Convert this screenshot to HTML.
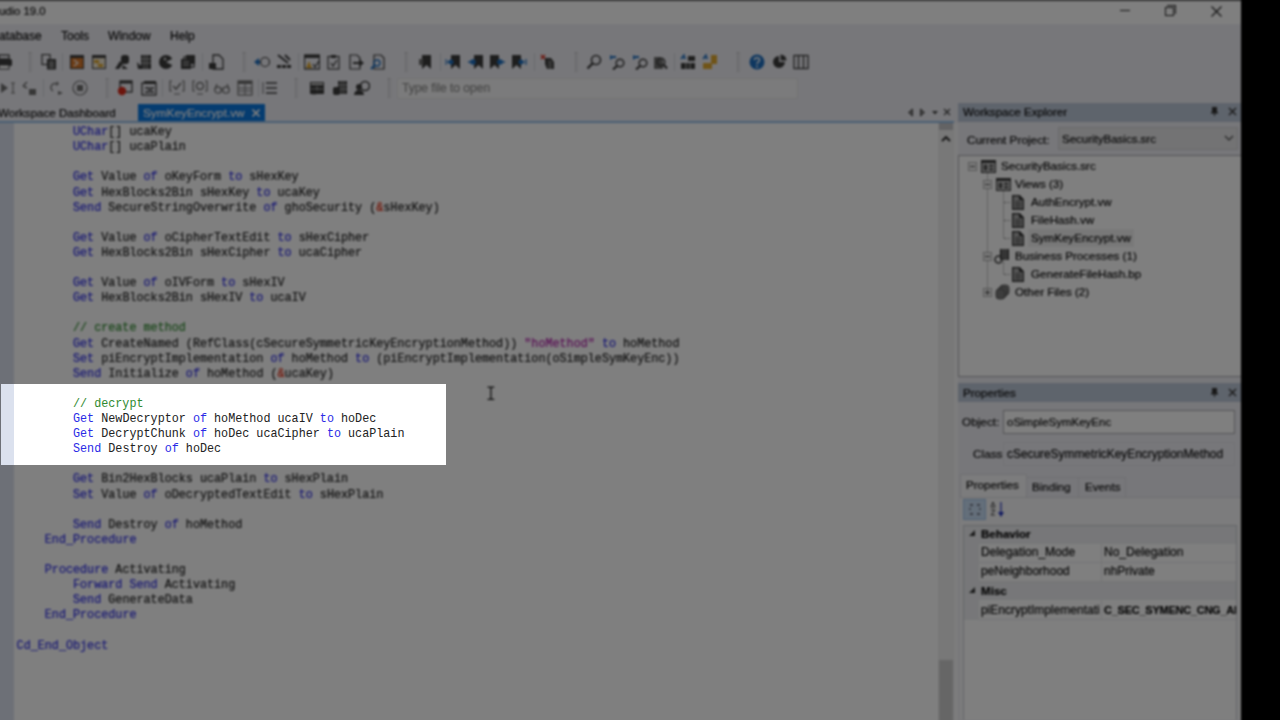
<!DOCTYPE html>
<html><head><meta charset="utf-8">
<style>
*{margin:0;padding:0;box-sizing:border-box}
html,body{width:1280px;height:720px;overflow:hidden;background:#000}
body{position:relative;font-family:"Liberation Sans",sans-serif;font-size:11.5px;color:#050505}
.a{position:absolute}
.t{position:absolute;white-space:pre;line-height:14px;-webkit-text-stroke:0.15px currentColor}
#app{position:absolute;left:0;top:0;width:1241px;height:720px}
.grip{position:absolute;width:3px;border-left:1px dotted #a9a9a9;border-right:1px dotted #c9c9c9}
.vsep{position:absolute;width:1px;background:#cfd2d8}
.ln{position:absolute;left:16.6px;height:15px;white-space:pre;font-family:"Liberation Mono",monospace;font-size:11.75px;line-height:15px;color:#222;transform:translateY(1px) scaleY(1.08);transform-origin:0 10.6px}
#blurwrap .ln{-webkit-text-stroke:0.2px currentColor}
#hl .ln{-webkit-text-stroke:0px currentColor}
.k{color:#2b2be6}.i{color:#222}.c{color:#2f8a2f}.s{color:#b01aa8}.r{color:#e02a10}
.ph{position:absolute;left:0;width:283px;height:19px;background:#bdc8d8}
.ti{position:absolute;font-size:11.6px;line-height:14px;white-space:pre;color:#000;-webkit-text-stroke:0.15px currentColor}
.dot{position:absolute;border-left:1px dotted #8a8a8a}
.doth{position:absolute;border-top:1px dotted #8a8a8a}
.pm{position:absolute;width:9px;height:9px;border:1px solid #b0b0b0;background:#f4f4f4}
.pm:after{content:"";position:absolute;left:1px;top:3px;width:5px;height:1px;background:#444}
.fi{position:absolute;width:10px;height:13px;background:#4a4a4a}
.fi:after{content:"";position:absolute;left:2px;top:4px;width:6px;height:7px;border-top:1px solid #aaa;border-bottom:1px solid #aaa}
.pr{position:absolute;left:0;width:274px;height:19px}
#ov{position:absolute;left:0;top:0;width:1280px;height:720px}
.o{position:absolute;background:rgba(0,0,0,0.5)}
</style></head><body>
<div id="blurwrap" style="position:absolute;left:0;top:0;width:1280px;height:720px;filter:blur(1px)">
<div id="app">
 <div class="a" style="left:-20px;top:-20px;width:1261px;height:760px;background:#efeff5"></div>
 <!-- title bar -->
 <div class="a" style="left:-20px;top:-20px;width:1261px;height:44px;background:#fff"></div>
 <div class="a" style="left:-20px;top:0;width:1261px;height:1px;background:#555"></div>
 <div class="a" style="left:-20px;top:-20px;width:1261px;height:20px;background:#888"></div>
 <div class="t" style="left:-1px;top:4px;font-size:11.3px">udio 19.0</div>
 <div class="a" style="left:1120px;top:10px;width:10px;height:1px;background:#222"></div>
 <div class="a" style="left:1165px;top:7px;width:9px;height:9px;border:1px solid #222"></div>
 <div class="a" style="left:1167px;top:5px;width:9px;height:9px;border-top:1px solid #222;border-right:1px solid #222"></div>
 <svg class="a" style="left:1211px;top:6px" width="11" height="11"><path d="M0.5 0.5L10.5 10.5M10.5 0.5L0.5 10.5" stroke="#222" stroke-width="1.1"/></svg>
 <!-- menu -->
 <div class="t" style="left:-1px;top:29px;font-size:12px">atabase</div>
 <div class="t" style="left:61px;top:29px;font-size:12px">Tools</div>
 <div class="t" style="left:108px;top:29px;font-size:12px">Window</div>
 <div class="t" style="left:170px;top:29px;font-size:12px">Help</div>
 <!-- toolbars -->
<svg class="a" style="left:-4px;top:54px" width="16" height="16" viewBox="0 0 16 16"><rect x="3" y="1" width="10" height="4" fill="none" stroke="#3c3c3c" stroke-width="1.3"/><rect x="0" y="5" width="16" height="7" rx="1.5" fill="#3c3c3c"/><rect x="3" y="11" width="10" height="4" fill="#fff" stroke="#3c3c3c"/></svg>
<div class="grip" style="left:29px;top:52px;height:20px"></div>
<svg class="a" style="left:41px;top:54px" width="16" height="16" viewBox="0 0 16 16"><rect x="1" y="0.5" width="8" height="10" fill="none" stroke="#3c3c3c" stroke-width="1.2"/><rect x="6" y="5" width="9" height="10.5" fill="#3c3c3c"/><path d="M8 8H13M8 10.5H13M8 13H13" stroke="#ddd"/></svg>
<div class="vsep" style="left:62px;top:53px;height:18px"></div>
<svg class="a" style="left:69px;top:54px" width="16" height="16" viewBox="0 0 16 16"><rect x="1" y="1" width="14" height="14" fill="#3c3c3c"/><rect x="2" y="4" width="12" height="10" fill="#d8782a"/><path d="M5 6L9 9L5 12" stroke="#fff" stroke-width="1.2" fill="none"/></svg>
<svg class="a" style="left:91px;top:54px" width="16" height="16" viewBox="0 0 16 16"><rect x="1" y="1" width="14" height="14" fill="#3c3c3c"/><rect x="2" y="4" width="12" height="10" fill="#f0e6d0"/><path d="M3 6H8V10H12V13H7V9H3Z" fill="#e0a830"/></svg>
<svg class="a" style="left:114px;top:54px" width="16" height="16" viewBox="0 0 16 16"><path d="M1 15L6 7L9 10L5 15Z" fill="#3c3c3c"/><rect x="7" y="1" width="8" height="9" rx="3" fill="#3c3c3c"/><path d="M9 11L14 15H8Z" fill="#3c3c3c"/></svg>
<svg class="a" style="left:136px;top:54px" width="16" height="16" viewBox="0 0 16 16"><rect x="5" y="1" width="10" height="14" fill="#3c3c3c"/><path d="M8 1V15M11 1V15M5 5H15M5 9H15" stroke="#ccc" stroke-width="0.8"/><path d="M1 8L5 12V15H2Z" fill="#3c3c3c"/></svg>
<svg class="a" style="left:158px;top:54px" width="16" height="16" viewBox="0 0 16 16"><circle cx="8" cy="8" r="7" fill="#3c3c3c"/><path d="M8 8L16 4V12Z" fill="#eef0f4"/><circle cx="7" cy="5" r="1.2" fill="#eee"/></svg>
<svg class="a" style="left:180px;top:54px" width="16" height="16" viewBox="0 0 16 16"><rect x="1" y="5" width="10" height="10" fill="#3c3c3c"/><rect x="4" y="3" width="10" height="10" fill="none" stroke="#3c3c3c" stroke-width="1.3"/><rect x="6" y="1" width="9" height="9" fill="#3c3c3c"/><path d="M3 8H9M3 11H9" stroke="#ccc"/></svg>
<div class="vsep" style="left:202px;top:53px;height:18px"></div>
<svg class="a" style="left:208px;top:54px" width="16" height="16" viewBox="0 0 16 16"><path d="M5 1H11L15 5V15H5Z" fill="none" stroke="#3c3c3c" stroke-width="1.3"/><rect x="1" y="9" width="7" height="6" fill="#3c3c3c"/></svg>
<div class="grip" style="left:243px;top:52px;height:20px"></div>
<svg class="a" style="left:254px;top:54px" width="16" height="16" viewBox="0 0 16 16"><path d="M0 8L5 4V12Z" fill="#1f6fc0"/><rect x="3" y="7" width="4" height="2" fill="#1f6fc0"/><circle cx="11" cy="8" r="4.5" fill="none" stroke="#3c3c3c" stroke-width="1.2"/></svg>
<svg class="a" style="left:276px;top:54px" width="16" height="16" viewBox="0 0 16 16"><path d="M2 1L12 9M9 1L14 6" stroke="#3c3c3c" stroke-width="2"/><rect x="1" y="11" width="4" height="3" fill="#3c3c3c"/><rect x="6" y="11" width="4" height="3" fill="#3c3c3c"/><rect x="11" y="11" width="4" height="3" fill="#3c3c3c"/></svg>
<div class="vsep" style="left:298px;top:53px;height:18px"></div>
<svg class="a" style="left:304px;top:54px" width="16" height="16" viewBox="0 0 16 16"><rect x="0.5" y="1" width="15" height="14" fill="none" stroke="#3c3c3c" stroke-width="1.3"/><rect x="0.5" y="1" width="15" height="3" fill="#3c3c3c"/><path d="M5 7L8 14H2Z" fill="#e0a830"/><path d="M9 10L11 13L15 7" stroke="#3c3c3c" stroke-width="1.3" fill="none"/></svg>
<svg class="a" style="left:326px;top:54px" width="16" height="16" viewBox="0 0 16 16"><rect x="2" y="2.5" width="11" height="12.5" fill="none" stroke="#3c3c3c" stroke-width="1.2"/><rect x="5" y="1" width="5" height="3" fill="#3c3c3c"/><path d="M5 9L7 12L11 6" stroke="#3c3c3c" stroke-width="1.3" fill="none"/></svg>
<svg class="a" style="left:348px;top:54px" width="16" height="16" viewBox="0 0 16 16"><path d="M2 1H9L12 4V15H2Z" fill="none" stroke="#3c3c3c" stroke-width="1.2"/><path d="M5 8H11V5L16 9L11 13V10H5Z" fill="#3c3c3c"/></svg>
<svg class="a" style="left:370px;top:54px" width="16" height="16" viewBox="0 0 16 16"><path d="M4 1H11L14 4V15H4Z" fill="none" stroke="#3c3c3c" stroke-width="1.2"/><circle cx="7" cy="9" r="3" fill="none" stroke="#1f6fc0" stroke-width="1.4"/><path d="M5 11L1 15" stroke="#1f6fc0" stroke-width="2"/></svg>
<div class="grip" style="left:405px;top:52px;height:20px"></div>
<svg class="a" style="left:418px;top:54px" width="16" height="16" viewBox="0 0 16 16"><path d="M4 1H13V15L8.5 11L4 15Z" fill="#3c3c3c"/><rect x="1" y="5" width="4" height="6" fill="#6e6e6e"/></svg>
<div class="vsep" style="left:440px;top:53px;height:18px"></div>
<svg class="a" style="left:445px;top:54px" width="16" height="16" viewBox="0 0 16 16"><path d="M6 1H15V15L10.5 11L6 15Z" fill="#3c3c3c"/><path d="M1 5V11" stroke="#1f6fc0"/><circle cx="6" cy="8" r="2.5" fill="#1f6fc0"/><path d="M2 8H5" stroke="#1f6fc0" stroke-width="1.5"/></svg>
<svg class="a" style="left:468px;top:54px" width="16" height="16" viewBox="0 0 16 16"><path d="M6 1H15V15L10.5 11L6 15Z" fill="#3c3c3c"/><circle cx="5" cy="8" r="2.8" fill="#1f6fc0"/><path d="M0 8H4" stroke="#1f6fc0" stroke-width="1.5"/></svg>
<svg class="a" style="left:489px;top:54px" width="16" height="16" viewBox="0 0 16 16"><path d="M1 1H10V15L5.5 11L1 15Z" fill="#3c3c3c"/><circle cx="11" cy="8" r="2.8" fill="#1f6fc0"/><path d="M12 8H16" stroke="#1f6fc0" stroke-width="1.5"/></svg>
<svg class="a" style="left:511px;top:54px" width="16" height="16" viewBox="0 0 16 16"><path d="M1 1H10V15L5.5 11L1 15Z" fill="#3c3c3c"/><circle cx="10" cy="8" r="2.5" fill="#1f6fc0"/><path d="M11 8H14M15 5V11" stroke="#1f6fc0" stroke-width="1.2"/></svg>
<div class="vsep" style="left:534px;top:53px;height:18px"></div>
<svg class="a" style="left:540px;top:54px" width="16" height="16" viewBox="0 0 16 16"><path d="M1 1L5 5M5 1L1 5" stroke="#d82a1a" stroke-width="1.5"/><path d="M5 4H11L14 8V15H7L5 10Z" fill="#3c3c3c"/><path d="M9 6V15M11 7V15" stroke="#999"/></svg>
<div class="grip" style="left:575px;top:52px;height:20px"></div>
<svg class="a" style="left:586px;top:54px" width="16" height="16" viewBox="0 0 16 16"><circle cx="10" cy="6" r="4.5" fill="none" stroke="#3c3c3c" stroke-width="1.6"/><path d="M7 9L1.5 14.5" stroke="#3c3c3c" stroke-width="2.4"/></svg>
<svg class="a" style="left:609px;top:54px" width="16" height="16" viewBox="0 0 16 16"><path d="M1 1L5 3L1 6Z" fill="#1f6fc0"/><rect x="4" y="2" width="3" height="2" fill="#1f6fc0"/><circle cx="11" cy="9" r="3.8" fill="none" stroke="#3c3c3c" stroke-width="1.5"/><path d="M8.5 11.5L4 15.5" stroke="#3c3c3c" stroke-width="2.2"/></svg>
<svg class="a" style="left:632px;top:54px" width="16" height="16" viewBox="0 0 16 16"><path d="M1 1L5 3L1 6Z" fill="#1f6fc0"/><rect x="4" y="2" width="3" height="2" fill="#1f6fc0"/><circle cx="11" cy="9" r="3.8" fill="none" stroke="#3c3c3c" stroke-width="1.5"/><path d="M8.5 11.5L4 15.5" stroke="#3c3c3c" stroke-width="2.2"/></svg>
<svg class="a" style="left:652px;top:54px" width="16" height="16" viewBox="0 0 16 16"><path d="M2 3H8L11 6V15H2Z" fill="#6e6e6e"/><circle cx="9" cy="8" r="3.8" fill="none" stroke="#3c3c3c" stroke-width="1.5"/><path d="M11.5 10.5L15 14.5" stroke="#3c3c3c" stroke-width="2.2"/></svg>
<div class="vsep" style="left:674px;top:53px;height:18px"></div>
<svg class="a" style="left:680px;top:54px" width="16" height="16" viewBox="0 0 16 16"><path d="M1 5L4 1V4H6" stroke="#1f6fc0" stroke-width="1.5" fill="none"/><rect x="8" y="2" width="7" height="5" fill="#3c3c3c"/><rect x="1" y="9" width="14" height="6" fill="#3c3c3c"/><path d="M6 9V15M10 9V15" stroke="#bbb"/></svg>
<svg class="a" style="left:702px;top:54px" width="16" height="16" viewBox="0 0 16 16"><path d="M1 5L4 1V4H6" stroke="#1f6fc0" stroke-width="1.5" fill="none"/><rect x="9" y="1" width="6" height="6" fill="#e0a830"/><rect x="1" y="9" width="9" height="6" fill="#e0a830"/><rect x="9" y="6" width="6" height="4" fill="#e0a830"/></svg>
<div class="grip" style="left:737px;top:52px;height:20px"></div>
<svg class="a" style="left:749px;top:54px" width="16" height="16" viewBox="0 0 16 16"><circle cx="8" cy="8" r="7.5" fill="#1f6fc0"/><path d="M5.5 6C5.5 3 10.5 3 10.5 6C10.5 8 8 8 8 10" stroke="#fff" stroke-width="1.6" fill="none"/><circle cx="8" cy="12.5" r="1" fill="#fff"/></svg>
<svg class="a" style="left:771px;top:54px" width="16" height="16" viewBox="0 0 16 16"><path d="M8 2A6 6 0 1 0 14 8H8Z" fill="#3c3c3c"/><path d="M9.5 0.5V6.5H15.5A6 6 0 0 0 9.5 0.5Z" fill="#3c3c3c"/></svg>
<svg class="a" style="left:793px;top:54px" width="16" height="16" viewBox="0 0 16 16"><rect x="1" y="1.5" width="14" height="13" fill="none" stroke="#3c3c3c" stroke-width="1.3"/><path d="M5.5 2V14M10.5 2V14" stroke="#3c3c3c" stroke-width="1.3"/></svg>
<svg class="a" style="left:0px;top:80px" width="16" height="16" viewBox="0 0 16 16"><path d="M1 3L8 8L1 13Z" fill="#6e6e6e"/><path d="M11 3H15M13 3V13M11 13H15" stroke="#6e6e6e" stroke-width="1.1"/></svg>
<svg class="a" style="left:21px;top:80px" width="16" height="16" viewBox="0 0 16 16"><path d="M2 6L6 2M2 6L6 8" stroke="#6e6e6e" stroke-width="1.5"/><rect x="8" y="9" width="7" height="6" fill="#6e6e6e"/></svg>
<div class="vsep" style="left:43px;top:79px;height:18px"></div>
<svg class="a" style="left:48px;top:80px" width="16" height="16" viewBox="0 0 16 16"><path d="M9 4A4 4 0 1 0 5 11" stroke="#6e6e6e" stroke-width="1.4" fill="none"/><path d="M9 1L11 4L8 6Z" fill="#6e6e6e"/><path d="M10 11L15 13L10 15Z" fill="#6e6e6e"/></svg>
<svg class="a" style="left:72px;top:80px" width="16" height="16" viewBox="0 0 16 16"><circle cx="8" cy="8" r="7" fill="none" stroke="#6e6e6e" stroke-width="1.2"/><rect x="5" y="5" width="6" height="6" fill="#6e6e6e"/></svg>
<div class="grip" style="left:106px;top:78px;height:20px"></div>
<svg class="a" style="left:117px;top:80px" width="16" height="16" viewBox="0 0 16 16"><rect x="3" y="1" width="12" height="11" fill="none" stroke="#3c3c3c" stroke-width="1.3"/><rect x="3" y="1" width="12" height="2.5" fill="#3c3c3c"/><circle cx="5" cy="11" r="4.2" fill="#d82a1a"/></svg>
<svg class="a" style="left:141px;top:80px" width="16" height="16" viewBox="0 0 16 16"><rect x="1" y="3" width="14" height="12" fill="none" stroke="#3c3c3c" stroke-width="1.3"/><rect x="3" y="1" width="12" height="3" fill="#3c3c3c"/><path d="M4 8H8V12H4M13 8H10V12H13" stroke="#3c3c3c" stroke-width="1.3" fill="none"/></svg>
<div class="vsep" style="left:162px;top:79px;height:18px"></div>
<svg class="a" style="left:169px;top:80px" width="16" height="16" viewBox="0 0 16 16"><path d="M3 1H1V11H3M13 1H15V11H13" stroke="#6e6e6e" stroke-width="1.2" fill="none"/><path d="M4 6L7 9L12 3" stroke="#6e6e6e" stroke-width="1.6" fill="none"/><path d="M5 14H11" stroke="#6e6e6e"/></svg>
<svg class="a" style="left:192px;top:80px" width="16" height="16" viewBox="0 0 16 16"><path d="M3 1H1V11H3M13 1H15V11H13" stroke="#6e6e6e" stroke-width="1.2" fill="none"/><circle cx="8" cy="6" r="3.5" fill="none" stroke="#6e6e6e" stroke-width="1.5"/><path d="M5 14H11" stroke="#6e6e6e"/></svg>
<svg class="a" style="left:214px;top:80px" width="16" height="16" viewBox="0 0 16 16"><circle cx="4" cy="10" r="3.2" fill="none" stroke="#6e6e6e" stroke-width="1.3"/><circle cx="12" cy="10" r="3.2" fill="none" stroke="#6e6e6e" stroke-width="1.3"/><path d="M7 9H9M1 9L3 4M15 9L13 4" stroke="#6e6e6e" stroke-width="1.2"/></svg>
<svg class="a" style="left:237px;top:80px" width="16" height="16" viewBox="0 0 16 16"><rect x="1" y="1" width="14" height="14" fill="none" stroke="#6e6e6e" stroke-width="1.2"/><rect x="1" y="1" width="14" height="3" fill="#6e6e6e"/><path d="M1 8H15M1 11H15M8 4V15" stroke="#6e6e6e"/></svg>
<div class="vsep" style="left:258px;top:79px;height:18px"></div>
<svg class="a" style="left:262px;top:80px" width="16" height="16" viewBox="0 0 16 16"><path d="M4 3H15M4 8H15M4 13H15" stroke="#3c3c3c" stroke-width="1.6"/><path d="M1 2V14" stroke="#6e6e6e"/></svg>
<div class="grip" style="left:295px;top:78px;height:20px"></div>
<svg class="a" style="left:309px;top:80px" width="16" height="16" viewBox="0 0 16 16"><rect x="1" y="2" width="14" height="12" fill="#3c3c3c"/><rect x="2" y="3" width="12" height="2" fill="#ccc"/><path d="M8 6V13M2 9H14" stroke="#aaa"/><ellipse cx="5" cy="12" rx="4" ry="2.5" fill="#3c3c3c"/></svg>
<svg class="a" style="left:332px;top:80px" width="16" height="16" viewBox="0 0 16 16"><rect x="6" y="1" width="9" height="13" fill="#3c3c3c"/><path d="M9 1V14M12 1V14M6 5H15M6 9H15" stroke="#aaa"/><rect x="1" y="7" width="7" height="8" rx="2" fill="#3c3c3c"/></svg>
<svg class="a" style="left:354px;top:80px" width="16" height="16" viewBox="0 0 16 16"><circle cx="11" cy="6" r="4.5" fill="none" stroke="#3c3c3c" stroke-width="1.6"/><circle cx="5" cy="7" r="3" fill="#3c3c3c"/><path d="M0 15A5 5 0 0 1 10 15Z" fill="#3c3c3c"/></svg>
<div class="grip" style="left:388px;top:78px;height:20px"></div>
 <div class="a" style="left:397px;top:78px;width:401px;height:21px;background:#f7f7f8;border:1px solid #e4e4e6"></div>
 <div class="t" style="left:402px;top:81px;font-size:12px;color:#8c8c8c">Type file to open</div>
 <!-- tabs -->
 <div class="t" style="left:-2px;top:106px;font-size:11.6px">Workspace Dashboard</div>
 <div class="a" style="left:138px;top:104px;width:127px;height:18px;background:#0a78e0"></div>
 <div class="t" style="left:143px;top:106px;font-size:11.8px;color:#fff">SymKeyEncrypt.vw</div>
 <svg class="a" style="left:252px;top:109px" width="8" height="8"><path d="M0.5 0.5L7.5 7.5M7.5 0.5L0.5 7.5" stroke="#fff" stroke-width="1.6"/></svg>
 <svg class="a" style="left:906px;top:108px" width="48" height="10"><path d="M6.5 1L2.5 4.5L6.5 8Z" fill="#888" stroke="#444" stroke-width="1"/><path d="M14.5 1L18.5 4.5L14.5 8Z" fill="#888" stroke="#444" stroke-width="1"/><path d="M26 3H32L29 6.5Z" fill="#444"/><path d="M38 1L44 7M44 1L38 7" stroke="#444" stroke-width="1.2"/></svg>
 <div class="a" style="left:-20px;top:121px;width:974px;height:2px;background:#92bde6"></div>
 <!-- editor -->
 <div class="a" style="left:0;top:123px;width:938px;height:617px;background:#fff">
  <div class="a" style="left:-20px;top:0;width:34px;height:617px;background:#dbe1ee"></div>
  <div class="a" style="left:0;top:1.2px;width:938px;height:596px">
<div class="ln" style="top:0.00px">        <span class="k">UChar</span><span class="i">[] ucaKey</span></div>
<div class="ln" style="top:15.10px">        <span class="k">UChar</span><span class="i">[] ucaPlain</span></div>
<div class="ln" style="top:45.30px">        <span class="k">Get</span><span class="i"> Value </span><span class="k">of</span><span class="i"> oKeyForm </span><span class="k">to</span><span class="i"> sHexKey</span></div>
<div class="ln" style="top:60.40px">        <span class="k">Get</span><span class="i"> HexBlocks2Bin sHexKey </span><span class="k">to</span><span class="i"> ucaKey</span></div>
<div class="ln" style="top:75.50px">        <span class="k">Send</span><span class="i"> SecureStringOverwrite </span><span class="k">of</span><span class="i"> ghoSecurity (</span><span class="r">&amp;</span><span class="i">sHexKey)</span></div>
<div class="ln" style="top:105.70px">        <span class="k">Get</span><span class="i"> Value </span><span class="k">of</span><span class="i"> oCipherTextEdit </span><span class="k">to</span><span class="i"> sHexCipher</span></div>
<div class="ln" style="top:120.80px">        <span class="k">Get</span><span class="i"> HexBlocks2Bin sHexCipher </span><span class="k">to</span><span class="i"> ucaCipher</span></div>
<div class="ln" style="top:151.00px">        <span class="k">Get</span><span class="i"> Value </span><span class="k">of</span><span class="i"> oIVForm </span><span class="k">to</span><span class="i"> sHexIV</span></div>
<div class="ln" style="top:166.10px">        <span class="k">Get</span><span class="i"> HexBlocks2Bin sHexIV </span><span class="k">to</span><span class="i"> ucaIV</span></div>
<div class="ln" style="top:196.30px">        <span class="c">// create method</span></div>
<div class="ln" style="top:211.40px">        <span class="k">Get</span><span class="i"> CreateNamed (RefClass(cSecureSymmetricKeyEncryptionMethod)) </span><span class="s">&quot;hoMethod&quot;</span><span class="i"> </span><span class="k">to</span><span class="i"> hoMethod</span></div>
<div class="ln" style="top:226.50px">        <span class="k">Set</span><span class="i"> piEncryptImplementation </span><span class="k">of</span><span class="i"> hoMethod </span><span class="k">to</span><span class="i"> (piEncryptImplementation(oSimpleSymKeyEnc))</span></div>
<div class="ln" style="top:241.60px">        <span class="k">Send</span><span class="i"> Initialize </span><span class="k">of</span><span class="i"> hoMethod (</span><span class="r">&amp;</span><span class="i">ucaKey)</span></div>
<div class="ln" style="top:271.80px">        <span class="c">// decrypt</span></div>
<div class="ln" style="top:286.90px">        <span class="k">Get</span><span class="i"> NewDecryptor </span><span class="k">of</span><span class="i"> hoMethod ucaIV </span><span class="k">to</span><span class="i"> hoDec</span></div>
<div class="ln" style="top:302.00px">        <span class="k">Get</span><span class="i"> DecryptChunk </span><span class="k">of</span><span class="i"> hoDec ucaCipher </span><span class="k">to</span><span class="i"> ucaPlain</span></div>
<div class="ln" style="top:317.10px">        <span class="k">Send</span><span class="i"> Destroy </span><span class="k">of</span><span class="i"> hoDec</span></div>
<div class="ln" style="top:347.30px">        <span class="k">Get</span><span class="i"> Bin2HexBlocks ucaPlain </span><span class="k">to</span><span class="i"> sHexPlain</span></div>
<div class="ln" style="top:362.40px">        <span class="k">Set</span><span class="i"> Value </span><span class="k">of</span><span class="i"> oDecryptedTextEdit </span><span class="k">to</span><span class="i"> sHexPlain</span></div>
<div class="ln" style="top:392.60px">        <span class="k">Send</span><span class="i"> Destroy </span><span class="k">of</span><span class="i"> hoMethod</span></div>
<div class="ln" style="top:407.70px">    <span class="k">End_Procedure</span></div>
<div class="ln" style="top:437.90px">    <span class="k">Procedure</span><span class="i"> Activating</span></div>
<div class="ln" style="top:453.00px">        <span class="k">Forward Send</span><span class="i"> Activating</span></div>
<div class="ln" style="top:468.10px">        <span class="k">Send</span><span class="i"> GenerateData</span></div>
<div class="ln" style="top:483.20px">    <span class="k">End_Procedure</span></div>
<div class="ln" style="top:513.40px"><span class="k">Cd_End_Object</span></div>
  </div>
 </div>
 <svg class="a" style="left:487px;top:386px" width="8" height="15"><path d="M0.5 1.2H3.2L3.9 2.2L4.6 1.2H7.3M3.9 2V12.5M0.5 13.3H3.2L3.9 12.3L4.6 13.3H7.3" stroke="#1a1a1a" stroke-width="1.3" fill="none"/></svg>
 <!-- vscroll -->
 <div class="a" style="left:938px;top:123px;width:16px;height:617px;background:#f0f0f0"></div>
 <div class="a" style="left:954px;top:123px;width:4px;height:617px;background:#f9f9fa"></div>
 <div class="a" style="left:939px;top:123px;width:14px;height:7px;background:#c6c6c9"></div>
 <svg class="a" style="left:941px;top:135px" width="10" height="7"><path d="M1 6L5 2L9 6" stroke="#1e1e1e" stroke-width="1.8" fill="none"/></svg>
 <div class="a" style="left:939px;top:660px;width:14px;height:70px;background:#cdcdcd"></div>
 <!-- workspace explorer -->
 <div class="ph" style="left:958px;top:103px;height:18.5px"></div>
 <div class="t" style="left:963px;top:105px;font-size:11.6px">Workspace Explorer</div>
 <svg class="a" style="left:1210px;top:107px" width="28" height="10"><rect x="2" y="0" width="5" height="6" fill="#333"/><rect x="1" y="5" width="7" height="1.5" fill="#333"/><rect x="4" y="6" width="1" height="3" fill="#333"/><path d="M19 1L26 8M26 1L19 8" stroke="#333" stroke-width="1.4"/></svg>
 <div class="t" style="left:967px;top:133px;font-size:11.8px">Current Project:</div>
 <div class="a" style="left:1058px;top:127px;width:180px;height:23px;background:#e6e6e8;border:1px solid #d2d2d5"></div>
 <div class="t" style="left:1062px;top:132px;font-size:11.5px">SecurityBasics.src</div>
 <svg class="a" style="left:1224px;top:135px" width="10" height="7"><path d="M1 1L5 5L9 1" stroke="#444" stroke-width="1.1" fill="none"/></svg>
 <div class="a" style="left:958px;top:155px;width:283px;height:222px;background:#fff;border:1px solid #a9a9ad;border-right:none"></div>
<div class="a" style="left:1028px;top:229px;width:106px;height:18px;background:#f1f1f1"></div>
<div class="dot" style="left:972px;top:171px;height:0px"></div>
<div class="dot" style="left:987px;top:172px;height:120px"></div>
<div class="dot" style="left:1003px;top:190px;height:48px"></div>
<div class="dot" style="left:1003px;top:262px;height:12px"></div>
<div class="doth" style="left:1004px;top:202px;width:6px"></div>
<div class="doth" style="left:1004px;top:220px;width:6px"></div>
<div class="doth" style="left:1004px;top:238px;width:6px"></div>
<div class="doth" style="left:1004px;top:274px;width:6px"></div>
<div class="pm" style="left:968px;top:162px"></div>
<svg class="a" style="left:981px;top:159px" width="15" height="14"><rect x="0.6" y="1.6" width="13.8" height="11.8" fill="#ddd" stroke="#3a3a3a" stroke-width="1.2"/><rect x="0.5" y="1" width="14" height="3" fill="#3a3a3a"/><rect x="2.5" y="5.5" width="4" height="6" fill="#555"/><rect x="8" y="5.5" width="4.5" height="2.5" fill="#555"/><rect x="8" y="9" width="4.5" height="2.5" fill="#555"/></svg>
<div class="ti" style="left:1001px;top:159px">SecurityBasics.src</div>
<div class="pm" style="left:983px;top:180px"></div>
<svg class="a" style="left:996px;top:177px" width="15" height="14"><rect x="0.6" y="1.6" width="13.8" height="11.8" fill="#ddd" stroke="#3a3a3a" stroke-width="1.2"/><rect x="0.5" y="1" width="14" height="3" fill="#3a3a3a"/><rect x="2.5" y="5.5" width="4" height="6" fill="#555"/><rect x="8" y="5.5" width="4.5" height="2.5" fill="#555"/><rect x="8" y="9" width="4.5" height="2.5" fill="#555"/></svg>
<div class="ti" style="left:1015px;top:177px">Views (3)</div>
<svg class="a" style="left:1012px;top:195px" width="12" height="15"><path d="M0.7 0.7H7.5L11.3 4.5V14.3H0.7Z" fill="#a8a8a8" stroke="#2a2a2a" stroke-width="1.3"/><path d="M7.5 0.7V4.5H11.3" fill="#333" stroke="#2a2a2a"/><path d="M3 7H9M3 9.5H9M3 12H9" stroke="#3a3a3a" stroke-width="1.1"/></svg>
<div class="ti" style="left:1031px;top:195px">AuthEncrypt.vw</div>
<svg class="a" style="left:1012px;top:213px" width="12" height="15"><path d="M0.7 0.7H7.5L11.3 4.5V14.3H0.7Z" fill="#a8a8a8" stroke="#2a2a2a" stroke-width="1.3"/><path d="M7.5 0.7V4.5H11.3" fill="#333" stroke="#2a2a2a"/><path d="M3 7H9M3 9.5H9M3 12H9" stroke="#3a3a3a" stroke-width="1.1"/></svg>
<div class="ti" style="left:1031px;top:213px">FileHash.vw</div>
<svg class="a" style="left:1012px;top:231px" width="12" height="15"><path d="M0.7 0.7H7.5L11.3 4.5V14.3H0.7Z" fill="#a8a8a8" stroke="#2a2a2a" stroke-width="1.3"/><path d="M7.5 0.7V4.5H11.3" fill="#333" stroke="#2a2a2a"/><path d="M3 7H9M3 9.5H9M3 12H9" stroke="#3a3a3a" stroke-width="1.1"/></svg>
<div class="ti" style="left:1031px;top:231px">SymKeyEncrypt.vw</div>
<div class="pm" style="left:983px;top:252px"></div>
<svg class="a" style="left:994px;top:248px" width="16" height="16"><rect x="6" y="1" width="9" height="11" fill="#3a3a3a"/><path d="M9 1V12M12 1V12" stroke="#ccc"/><circle cx="4.5" cy="11.5" r="3.5" fill="none" stroke="#3a3a3a" stroke-width="1.6"/></svg>
<div class="ti" style="left:1015px;top:249px">Business Processes (1)</div>
<svg class="a" style="left:1012px;top:267px" width="12" height="15"><path d="M0.7 0.7H7.5L11.3 4.5V14.3H0.7Z" fill="#a8a8a8" stroke="#2a2a2a" stroke-width="1.3"/><path d="M7.5 0.7V4.5H11.3" fill="#333" stroke="#2a2a2a"/><path d="M3 7H9M3 9.5H9M3 12H9" stroke="#3a3a3a" stroke-width="1.1"/></svg>
<div class="ti" style="left:1031px;top:267px">GenerateFileHash.bp</div>
<div class="pm" style="left:983px;top:288px"></div>
<div class="a" style="left:987px;top:290px;width:1px;height:5px;background:#444"></div>
<svg class="a" style="left:995px;top:284px" width="15" height="16"><rect x="5" y="1" width="9" height="10" rx="3" fill="#8a8a8a" stroke="#444" stroke-width="0.8"/><rect x="3" y="3" width="9" height="10" rx="3" fill="#8a8a8a" stroke="#444" stroke-width="0.8"/><rect x="1" y="5" width="9" height="10" rx="3" fill="#7a7a7a" stroke="#444" stroke-width="0.8"/></svg>
<div class="ti" style="left:1015px;top:285px">Other Files (2)</div>
 <!-- properties -->
 <div class="ph" style="left:958px;top:383px"></div>
 <div class="t" style="left:963px;top:386px;font-size:11.6px">Properties</div>
 <svg class="a" style="left:1210px;top:388px" width="28" height="10"><rect x="2" y="0" width="5" height="6" fill="#333"/><rect x="1" y="5" width="7" height="1.5" fill="#333"/><rect x="4" y="6" width="1" height="3" fill="#333"/><path d="M19 1L26 8M26 1L19 8" stroke="#333" stroke-width="1.4"/></svg>
 <div class="t" style="left:962px;top:415px;font-size:11.8px">Object:</div>
 <div class="a" style="left:1003px;top:410px;width:232px;height:24px;background:#fff;border:1px solid #a9a9ad"></div>
 <div class="t" style="left:1007px;top:415px;font-size:11.5px">oSimpleSymKeyEnc</div>
 <div class="t" style="left:973px;top:447px;font-size:11.8px">Class</div>
 <div class="a" style="left:1003px;top:442px;width:232px;height:24px;background:transparent;border:1px solid #e4e4e8"></div>
 <div class="t" style="left:1007px;top:447px;font-size:11.9px">cSecureSymmetricKeyEncryptionMethod</div>
 <!-- prop tabs -->
 <div class="a" style="left:960px;top:474px;width:67px;height:23px;background:#f9f9fa;border:1px solid #dcdde2;border-bottom:none"></div>
 <div class="a" style="left:1027px;top:477px;width:52px;height:20px;border:1px solid #dcdde2;border-bottom:none;border-left:none"></div>
 <div class="a" style="left:1079px;top:477px;width:47px;height:20px;border:1px solid #dcdde2;border-bottom:none;border-left:none"></div>
 <div class="t" style="left:966px;top:478px;font-size:11.6px">Properties</div>
 <div class="t" style="left:1032px;top:480px;font-size:11.6px">Binding</div>
 <div class="t" style="left:1085px;top:480px;font-size:11.6px">Events</div>
 <div class="a" style="left:960px;top:497px;width:281px;height:223px;background:#f9f9fa;border-top:1px solid #dcdde2"></div>
 <div class="a" style="left:963px;top:499px;width:23px;height:21px;background:#c9def5;border:1px solid #9fc3ea"></div>
 <svg class="a" style="left:967px;top:502px" width="16" height="16"><path d="M3 3H6M10 3H13M3 12H6M10 12H13M3 6V8M13 6V8" stroke="#556" stroke-width="1.3"/></svg>
 <svg class="a" style="left:990px;top:501px" width="16" height="18"><path d="M3 1L1 6H5Z" fill="none" stroke="#444"/><path d="M1 9H5L1 14H5" stroke="#444" fill="none"/><path d="M11 1V14" stroke="#2030c0" stroke-width="1.2"/><path d="M8 11L11 16L14 11Z" fill="#2030c0"/></svg>
 <!-- grid -->
 <div class="a" style="left:963px;top:525px;width:274px;height:195px;background:#fff;border:1px solid #c8cad0;border-bottom:none"></div>
 <div class="a" style="left:964px;top:526px;width:15px;height:94px;background:#eeeff2"></div>
 <div class="a" style="left:964px;top:526px;width:272px;height:18px;background:#eeeff2"></div>
 <div class="a" style="left:964px;top:582px;width:272px;height:18px;background:#eeeff2"></div>
 <div class="a" style="left:979px;top:562px;width:257px;height:1px;background:#e8e8ea"></div>
 <div class="a" style="left:979px;top:581px;width:257px;height:1px;background:#e8e8ea"></div>
 <div class="a" style="left:979px;top:619px;width:257px;height:1px;background:#e8e8ea"></div>
 <div class="a" style="left:1101px;top:544px;width:1px;height:38px;background:#e8e8ea"></div>
 <div class="a" style="left:1101px;top:600px;width:1px;height:20px;background:#e8e8ea"></div>
 <svg class="a" style="left:968px;top:529px" width="8" height="8"><path d="M7 1V7H1Z" fill="#333"/></svg>
 <svg class="a" style="left:968px;top:586px" width="8" height="8"><path d="M7 1V7H1Z" fill="#333"/></svg>
 <div class="t" style="left:981px;top:527px;font-size:11.6px;font-weight:bold">Behavior</div>
 <div class="t" style="left:981px;top:545px;font-size:12px">Delegation_Mode</div>
 <div class="t" style="left:1104px;top:545px;font-size:12px">No_Delegation</div>
 <div class="t" style="left:981px;top:564px;font-size:12px">peNeighborhood</div>
 <div class="t" style="left:1104px;top:564px;font-size:12px">nhPrivate</div>
 <div class="t" style="left:981px;top:584px;font-size:11.6px;font-weight:bold">Misc</div>
 <div class="a" style="left:979px;top:601px;width:121px;height:18px;overflow:hidden"><div class="t" style="left:2px;top:2px;font-size:12px">piEncryptImplementation</div></div>
 <div class="a" style="left:1102px;top:601px;width:134px;height:18px;overflow:hidden"><div class="t" style="left:2px;top:2px;font-size:11px;font-weight:bold;letter-spacing:-0.25px">C_SEC_SYMENC_CNG_AES</div></div>
</div>
</div>
<div id="ov">
 <div class="o" style="left:0;top:0;width:1280px;height:720px"></div>
</div>
<!-- sharp highlight -->
<div id="hl" class="a" style="left:1px;top:384px;width:445px;height:81px;overflow:hidden;background:#fff">
 <div class="a" style="left:-1px;top:-261px;width:938px;height:597px">
  <div class="a" style="left:0;top:0;width:14px;height:597px;background:#dbe1ee"></div>
  <div class="a" style="left:0;top:1.2px;width:938px;height:596px">
<div class="ln" style="top:0.00px">        <span class="k">UChar</span><span class="i">[] ucaKey</span></div>
<div class="ln" style="top:15.10px">        <span class="k">UChar</span><span class="i">[] ucaPlain</span></div>
<div class="ln" style="top:45.30px">        <span class="k">Get</span><span class="i"> Value </span><span class="k">of</span><span class="i"> oKeyForm </span><span class="k">to</span><span class="i"> sHexKey</span></div>
<div class="ln" style="top:60.40px">        <span class="k">Get</span><span class="i"> HexBlocks2Bin sHexKey </span><span class="k">to</span><span class="i"> ucaKey</span></div>
<div class="ln" style="top:75.50px">        <span class="k">Send</span><span class="i"> SecureStringOverwrite </span><span class="k">of</span><span class="i"> ghoSecurity (</span><span class="r">&amp;</span><span class="i">sHexKey)</span></div>
<div class="ln" style="top:105.70px">        <span class="k">Get</span><span class="i"> Value </span><span class="k">of</span><span class="i"> oCipherTextEdit </span><span class="k">to</span><span class="i"> sHexCipher</span></div>
<div class="ln" style="top:120.80px">        <span class="k">Get</span><span class="i"> HexBlocks2Bin sHexCipher </span><span class="k">to</span><span class="i"> ucaCipher</span></div>
<div class="ln" style="top:151.00px">        <span class="k">Get</span><span class="i"> Value </span><span class="k">of</span><span class="i"> oIVForm </span><span class="k">to</span><span class="i"> sHexIV</span></div>
<div class="ln" style="top:166.10px">        <span class="k">Get</span><span class="i"> HexBlocks2Bin sHexIV </span><span class="k">to</span><span class="i"> ucaIV</span></div>
<div class="ln" style="top:196.30px">        <span class="c">// create method</span></div>
<div class="ln" style="top:211.40px">        <span class="k">Get</span><span class="i"> CreateNamed (RefClass(cSecureSymmetricKeyEncryptionMethod)) </span><span class="s">&quot;hoMethod&quot;</span><span class="i"> </span><span class="k">to</span><span class="i"> hoMethod</span></div>
<div class="ln" style="top:226.50px">        <span class="k">Set</span><span class="i"> piEncryptImplementation </span><span class="k">of</span><span class="i"> hoMethod </span><span class="k">to</span><span class="i"> (piEncryptImplementation(oSimpleSymKeyEnc))</span></div>
<div class="ln" style="top:241.60px">        <span class="k">Send</span><span class="i"> Initialize </span><span class="k">of</span><span class="i"> hoMethod (</span><span class="r">&amp;</span><span class="i">ucaKey)</span></div>
<div class="ln" style="top:271.80px">        <span class="c">// decrypt</span></div>
<div class="ln" style="top:286.90px">        <span class="k">Get</span><span class="i"> NewDecryptor </span><span class="k">of</span><span class="i"> hoMethod ucaIV </span><span class="k">to</span><span class="i"> hoDec</span></div>
<div class="ln" style="top:302.00px">        <span class="k">Get</span><span class="i"> DecryptChunk </span><span class="k">of</span><span class="i"> hoDec ucaCipher </span><span class="k">to</span><span class="i"> ucaPlain</span></div>
<div class="ln" style="top:317.10px">        <span class="k">Send</span><span class="i"> Destroy </span><span class="k">of</span><span class="i"> hoDec</span></div>
<div class="ln" style="top:347.30px">        <span class="k">Get</span><span class="i"> Bin2HexBlocks ucaPlain </span><span class="k">to</span><span class="i"> sHexPlain</span></div>
<div class="ln" style="top:362.40px">        <span class="k">Set</span><span class="i"> Value </span><span class="k">of</span><span class="i"> oDecryptedTextEdit </span><span class="k">to</span><span class="i"> sHexPlain</span></div>
<div class="ln" style="top:392.60px">        <span class="k">Send</span><span class="i"> Destroy </span><span class="k">of</span><span class="i"> hoMethod</span></div>
<div class="ln" style="top:407.70px">    <span class="k">End_Procedure</span></div>
<div class="ln" style="top:437.90px">    <span class="k">Procedure</span><span class="i"> Activating</span></div>
<div class="ln" style="top:453.00px">        <span class="k">Forward Send</span><span class="i"> Activating</span></div>
<div class="ln" style="top:468.10px">        <span class="k">Send</span><span class="i"> GenerateData</span></div>
<div class="ln" style="top:483.20px">    <span class="k">End_Procedure</span></div>
<div class="ln" style="top:513.40px"><span class="k">Cd_End_Object</span></div>
  </div>
 </div>
</div>
</body></html>
